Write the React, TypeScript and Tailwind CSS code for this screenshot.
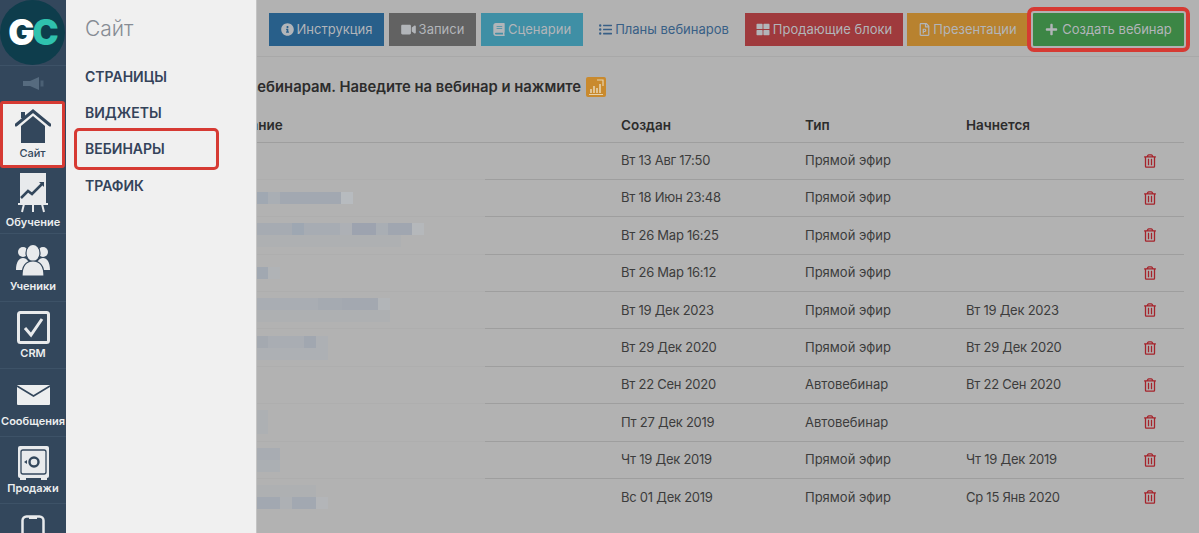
import React from "react";
import {
  FaBook,
  FaInfoCircle,
  FaListUl,
  FaPlus,
  FaRegFilePowerpoint,
  FaRegTrashAlt,
  FaThLarge,
  FaVideo,
} from "react-icons/fa";

const font = { fontFamily: "Inter, 'Noto Sans', sans-serif" };

const HomeIcon = () => (
  <svg width="36" height="34" viewBox="0 0 36 34">
    <path d="M1 16 18 2l17 14" fill="none" stroke="#33475c" strokeWidth="3" strokeLinecap="round" />
    <rect x="6" y="3" width="4" height="6" fill="#33475c" />
    <path d="M6 17 18 7l12 10v17H6z" fill="#33475c" />
  </svg>
);

const BoardIcon = () => (
  <svg width="30" height="40" viewBox="0 0 30 40">
    <rect x="2" y="0" width="26" height="30" fill="#e8eaec" />
    <path d="M3 25 10 18l4 3 10-10" fill="none" stroke="#33475c" strokeWidth="2.5" />
    <path d="M21 9h5v5z" fill="#33475c" />
    <path d="M0 31h30M6 31l-2 8M15 31v8M24 31l2 8" stroke="#e8eaec" strokeWidth="2" />
  </svg>
);

const UsersIcon = () => (
  <svg width="34" height="32" viewBox="0 0 34 32">
    <circle cx="7" cy="8" r="5" fill="#e8eaec" />
    <circle cx="27" cy="8" r="5" fill="#e8eaec" />
    <path d="M0 26c0-8 3-12 7-12s7 4 7 12zM20 26c0-8 3-12 7-12s7 4 7 12z" fill="#e8eaec" />
    <ellipse cx="17" cy="9" rx="7" ry="8.5" fill="#e8eaec" stroke="#33475c" strokeWidth="1.2" />
    <path d="M6 32c0-10 4-15 11-15s11 5 11 15z" fill="#e8eaec" stroke="#33475c" strokeWidth="1.2" />
  </svg>
);

const CheckIcon = () => (
  <svg width="33" height="33" viewBox="0 0 33 33">
    <rect x="1.5" y="1.5" width="30" height="30" rx="2" fill="#33475c" stroke="#e8eaec" strokeWidth="3" />
    <path d="M8 17l6 7L25 8" fill="none" stroke="#e8eaec" strokeWidth="3" />
  </svg>
);

const MailIcon = () => (
  <svg width="33" height="20" viewBox="0 0 33 20">
    <rect width="33" height="20" rx="1" fill="#eceeef" />
    <path d="M0 1l16.5 10L33 1" fill="none" stroke="#33475c" strokeWidth="1.6" />
  </svg>
);

const SafeIcon = () => (
  <svg width="33" height="34" viewBox="0 0 33 34">
    <rect x="1" y="0" width="31" height="32" rx="2" fill="#e8eaec" />
    <rect x="4" y="4" width="25" height="24" rx="2" fill="#e8eaec" stroke="#33475c" strokeWidth="1.3" />
    <circle cx="17" cy="16" r="4.5" fill="none" stroke="#33475c" strokeWidth="2.4" />
    <path d="M7 16l3-2v4z" fill="#33475c" />
    <path d="M3 32h6v2H3zM24 32h6v2h-6z" fill="#e8eaec" />
  </svg>
);

const PhoneIcon = () => (
  <svg width="24" height="40" viewBox="0 0 24 40">
    <rect x="1.5" y="1.5" width="21" height="37" rx="4" fill="none" stroke="#e8eaec" strokeWidth="2.5" />
    <rect x="8" y="1" width="8" height="3" fill="#e8eaec" />
  </svg>
);

const SpeakerIcon = () => (
  <svg width="21" height="13" viewBox="0 0 21 13">
    <path d="M0 4h7l9-4v13l-9-4H0z" fill="#566b7f" />
    <rect x="17.5" y="3.5" width="3" height="6" fill="#4b6074" />
  </svg>
);

const ChartBadge = () => (
  <svg width="20" height="20" viewBox="0 0 20 20" className="ml-[5px] shrink-0">
    <rect width="20" height="20" rx="2" fill="#c98a2e" />
    <path d="M5 16v-4M8 16V9M11 16v-5M14 16V7" stroke="#e6d3ae" strokeWidth="1.6" />
    <path d="M11 3h6v6" fill="none" stroke="#e6d3ae" strokeWidth="1.2" />
    <path d="M3 17.5h14" stroke="#e6d3ae" strokeWidth="1" />
  </svg>
);

const railItems = [
  { label: "Ученики", icon: <UsersIcon /> },
  { label: "CRM", icon: <CheckIcon /> },
  { label: "Сообщения", icon: <MailIcon /> },
  { label: "Продажи", icon: <SafeIcon /> },
];

const rows = [
  { created: "Вт 13 Авг 17:50", type: "Прямой эфир", start: "", bars: [] },
  {
    created: "Вт 18 Июн 23:48",
    type: "Прямой эфир",
    start: "",
    bars: [[{ w: 12, c: "#a0a8b2" }, { w: 12, c: "#a9aeb4" }, { w: 61, c: "#a2a8b1" }, { w: 12, c: "#b7bbbf" }]],
  },
  {
    created: "Вт 26 Мар 16:25",
    type: "Прямой эфир",
    start: "",
    bars: [
      [{ w: 36, c: "#a6abb2" }, { w: 12, c: "#9ea7b2" }, { w: 36, c: "#a7acb3" }, { w: 12, c: "#adb0b5" }, { w: 24, c: "#9da3af" }, { w: 12, c: "#a9aeb4" }, { w: 24, c: "#a0a6b0" }, { w: 12, c: "#b5b8bb" }],
      [{ w: 145, c: "#aeb0b2" }],
    ],
  },
  {
    created: "Вт 26 Мар 16:12",
    type: "Прямой эфир",
    start: "",
    bars: [[{ w: 12, c: "#a1a8b1" }, { w: 12, c: "#b0b3b6" }]],
  },
  {
    created: "Вт 19 Дек 2023",
    type: "Прямой эфир",
    start: "Вт 19 Дек 2023",
    bars: [
      [{ w: 62, c: "#a9adb3" }, { w: 24, c: "#a5aab1" }, { w: 36, c: "#a3a8b0" }, { w: 12, c: "#b2b5b8" }],
      [{ w: 134, c: "#aeb0b2" }],
    ],
  },
  {
    created: "Вт 29 Дек 2020",
    type: "Прямой эфир",
    start: "Вт 29 Дек 2020",
    bars: [
      [{ w: 12, c: "#a4a9b0" }, { w: 36, c: "#a9adb3" }, { w: 12, c: "#a1a7b0" }, { w: 12, c: "#adb0b4" }],
      [{ w: 72, c: "#adb0b4" }],
    ],
  },
  { created: "Вт 22 Сен 2020", type: "Автовебинар", start: "Вт 22 Сен 2020", bars: [] },
  {
    created: "Пт 27 Дек 2019",
    type: "Автовебинар",
    start: "",
    bars: [[{ w: 12, c: "#adb0b3" }], [{ w: 12, c: "#adb0b3" }]],
  },
  {
    created: "Чт 19 Дек 2019",
    type: "Прямой эфир",
    start: "Чт 19 Дек 2019",
    bars: [[{ w: 24, c: "#a8acb2" }], [{ w: 24, c: "#abafb3" }]],
  },
  {
    created: "Вс 01 Дек 2019",
    type: "Прямой эфир",
    start: "Ср 15 Янв 2020",
    bars: [
      [{ w: 60, c: "#aeb0b2" }],
      [{ w: 24, c: "#a2a8b1" }, { w: 12, c: "#adb0b4" }, { w: 24, c: "#a2a8b1" }, { w: 12, c: "#b3b5b8" }],
    ],
  },
];

const Rail = () => (
  <div className="flex w-[66px] shrink-0 flex-col bg-[#33475c] text-[#eceeef]">
    <div className="flex h-[65px] w-[65px] shrink-0 items-center justify-center rounded-full bg-[#0e3d4c] text-[35px] leading-none font-black tracking-[-2px]">
      <span className="text-white">G</span>
      <span className="text-[#2fc2ae]">C</span>
    </div>
    <div className="flex h-[36px] shrink-0 items-center justify-center border-t border-[#3d5267]">
      <SpeakerIcon />
    </div>
    <div className="flex h-[67px] w-[65px] shrink-0 flex-col items-center justify-end rounded-[3px] border-[3px] border-[#d63a33] bg-[#f0f0f0] pb-[4px] text-[11px] font-medium text-[#33475c]">
      <HomeIcon />
      <span className="mt-[2px]">Сайт</span>
    </div>
    <div className="flex h-[66px] shrink-0 flex-col items-center justify-end border-b border-[#3d5267] pb-[3px] text-[11px] leading-[16px] font-semibold">
      <div className="flex flex-1 items-center justify-center pt-[4px]">
        <BoardIcon />
      </div>
      <span className="whitespace-nowrap">Обучение</span>
    </div>
    {railItems.map((item) => (
      <div
        key={item.label}
        className="flex h-[67.6px] shrink-0 flex-col items-center justify-end border-b border-[#3d5267] pb-[7px] text-[11px] leading-[16px] font-semibold"
      >
        <div className="flex flex-1 items-center justify-center pt-[9px]">{item.icon}</div>
        <span className="whitespace-nowrap">{item.label}</span>
      </div>
    ))}
    <div className="flex shrink-0 justify-center pt-[11px]">
      <PhoneIcon />
    </div>
  </div>
);

const SidePanel = () => (
  <div className="absolute top-0 bottom-0 left-[66px] w-[191px] border-r border-[#c4c4c4] bg-[#f0f0f0]">
    <div className="pt-[16px] pl-[19px] text-[21px] leading-[26px] font-light text-[#868c94]">Сайт</div>
    <div className="mt-[16px] flex flex-col text-[14px] font-semibold text-[#34435a]">
      <div className="ml-[11px] flex h-[36.4px] w-[139px] items-center px-[8px]">СТРАНИЦЫ</div>
      <div className="ml-[11px] flex h-[36.4px] w-[139px] items-center px-[8px]">ВИДЖЕТЫ</div>
      <div className="ml-[11px] flex h-[36.4px] w-[139px] items-center rounded-[2px] px-[8px] outline-[3px] outline-[#d63a33]">
        ВЕБИНАРЫ
      </div>
      <div className="ml-[11px] flex h-[36.4px] w-[139px] items-center px-[8px]">ТРАФИК</div>
    </div>
  </div>
);

const TopBar = () => (
  <div className="flex h-[57px] items-start justify-end gap-[5px] border-b border-[#a8a8a8] pt-[13px] pr-[15px] text-[13px] whitespace-nowrap text-[#b2b5b9]">
    <div className="flex h-[33px] w-[115px] items-center justify-center gap-[3px] bg-[#285f8a]">
      <FaInfoCircle className="h-[13px] w-[13px]" />
      Инструкция
    </div>
    <div className="flex h-[33px] w-[87px] items-center justify-center gap-[3px] bg-[#626262]">
      <FaVideo className="h-[13px] w-[15px]" />
      Записи
    </div>
    <div className="flex h-[33px] w-[102px] items-center justify-center gap-[3px] bg-[#3f8fa5]">
      <FaBook className="h-[13px] w-[12px]" />
      Сценарии
    </div>
    <div className="ml-[11px] flex h-[33px] w-[130px] items-center justify-center gap-[3px] text-[#385f86]">
      <FaListUl className="h-[13px] w-[13px]" />
      Планы вебинаров
    </div>
    <div className="-mr-[1px] ml-[11px] flex h-[33px] w-[158px] items-center justify-center gap-[3px] bg-[#9f3a3d]">
      <FaThLarge className="h-[13px] w-[14px]" />
      Продающие блоки
    </div>
    <div className="-mr-[1px] flex h-[33px] w-[122px] items-center justify-center gap-[3px] bg-[#b8822f]">
      <FaRegFilePowerpoint className="h-[13px] w-[11px]" />
      Презентации
    </div>
    <div className="flex h-[33px] w-[151px] items-center justify-center gap-[4px] rounded-[1px] bg-[#3c8645] outline-[4px] outline-offset-[2px] outline-[#d63a33]">
      <FaPlus className="h-[13px] w-[13px]" />
      Создать вебинар
    </div>
  </div>
);

const Webinars = () => (
  <div className="pr-[15px] pl-[139px] text-[#3c3c3c]">
    <div className="flex h-[60px] w-[401px] items-center justify-end text-[14.8px] leading-none font-semibold whitespace-nowrap text-[#2c2c2c]">
      вебинарам. Наведите на вебинар и нажмите
      <ChartBadge />
    </div>
    <table className="w-[979px] table-fixed border-collapse text-[13px]">
      <colgroup>
        <col className="w-[280px]" />
        <col className="w-[136px]" />
        <col className="w-[184px]" />
        <col className="w-[161px]" />
        <col className="w-[177px]" />
        <col />
      </colgroup>
      <thead>
        <tr className="h-[25px] border-b border-[#9e9e9e] text-left align-top text-[13.5px] leading-[16px] text-[#2c2c2c]">
          <th className="pl-[13px] font-semibold">Название</th>
          <th />
          <th className="font-semibold">Создан</th>
          <th className="font-semibold">Тип</th>
          <th className="font-semibold">Начнется</th>
          <th />
        </tr>
      </thead>
      <tbody>
        {rows.map((row) => (
          <tr key={row.created} className="h-[37.4px] [&:last-child>td]:border-b-0">
            <td className="border-b border-[#aeaeae] pl-[30px]">
              <div className="flex flex-col blur-[0.5px]">
                {row.bars.map((line, i) => (
                  <div key={i} className="flex h-[12px]">
                    {line.map((seg, j) => (
                      <div key={j} style={{ width: seg.w + (j === 0 ? 21 : 0), backgroundColor: seg.c }} />
                    ))}
                  </div>
                ))}
              </div>
            </td>
            <td className="border-b border-[#9e9e9e]" />
            <td className="border-b border-[#9e9e9e] tracking-[-0.25px]">{row.created}</td>
            <td className="border-b border-[#9e9e9e]">{row.type}</td>
            <td className="border-b border-[#9e9e9e] tracking-[-0.25px]">{row.start}</td>
            <td className="border-b border-[#9e9e9e] pl-[1px]">
              <FaRegTrashAlt className="h-[14px] w-[12px] text-[#a5232b]" />
            </td>
          </tr>
        ))}
      </tbody>
    </table>
  </div>
);

export default function App() {
  return (
    <div className="relative flex h-[533px] w-[1199px] overflow-hidden bg-[#b2b2b2]" style={font}>
      <Rail />
      <div className="min-w-0 flex-1">
        <TopBar />
        <Webinars />
      </div>
      <SidePanel />
    </div>
  );
}
